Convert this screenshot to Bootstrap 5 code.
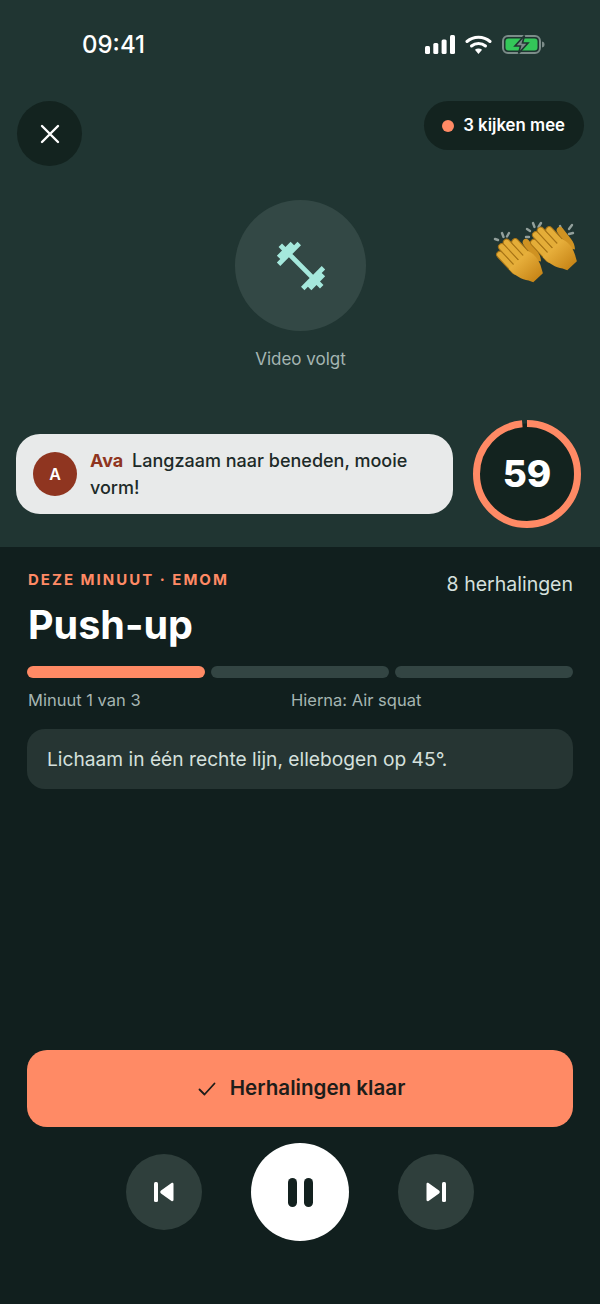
<!DOCTYPE html>
<html lang="nl">
<head>
  <meta charset="UTF-8">
  <meta name="viewport" content="width=device-width, initial-scale=1.0">
  <title>Push-up</title>
  <link href="https://cdn.jsdelivr.net/npm/bootstrap@5.3.0/dist/css/bootstrap.min.css" rel="stylesheet">
  <style>
    html, body { height: 100%; }
    body {
      background: #111f1e;
      color: #fff;
      font-family: "Inter", "Liberation Sans", sans-serif;
    }
    .screen { height: 1304px; }
    .stage { height: 547px; background: #203532; padding: 0 16px 19px 17px; }
    .status-row { height: 90px; padding: 0 39px 0 65px; }
    .clock { font-size: 24px; font-weight: 500; line-height: 1; }
    .status-icons { gap: 10px; margin-top: -2px; }
    .top-row { margin-top: 11px; }
    .close-btn { width: 65px; height: 65px; background: #13231f; padding: 0; border: 0; }
    .viewers { height: 49px; padding: 0 19px 0 18px; background: #13231f; font-size: 16.8px; font-weight: 600; gap: 9px; }
    .viewers i { width: 12px; height: 12px; background: #ff8a65; }
    .video-slot { margin-top: 34px; }
    .disc { width: 131px; height: 131px; background: #334845; }
    .video-label { margin-top: 17px; font-size: 17px; line-height: 22px; color: #a5b5b2; }
    .claps { position: absolute; left: 490px; top: 218px; }
    .bubble { width: 437px; height: 80px; background: #e8eaea; border-radius: 24px; padding: 0 16px 0 17px; gap: 13px; color: #1d2a28; font-size: 18px; line-height: 27px; font-weight: 500; margin-left: -1px; }
    .ava { width: 44px; height: 44px; background: #8f3520; color: #fff; font-size: 16px; font-weight: 600; }
    .ava-name { color: #8f3520; font-weight: 700; margin-right: 4px; }
    .timer { width: 108px; height: 108px; margin-right: 3px; }
    .timer-num { position: absolute; inset: 0; font-size: 37px; font-weight: 800; }
    .panel { height: 757px; padding: 23px 27px 63px; }
    .kicker { color: #ff8a65; font-size: 15px; font-weight: 700; letter-spacing: 2px; line-height: 20px; padding-left: 1px; }
    .reps { margin-top: 2px; font-size: 19.5px; line-height: 24px; color: #d5e0dd; }
    .title { margin: 6px 0 0 1px; font-size: 39.5px; font-weight: 700; line-height: 46px; }
    .segments { margin-top: 18px; gap: 6px; }
    .segments span { height: 12px; background: #334543; }
    .segments .on { background: #ff8a65; }
    .meta { margin-top: 12px; font-size: 16.5px; line-height: 20px; color: #a5b5b2; padding-left: 1px; }
    .meta span:first-child { width: 263px; }
    .cue { margin-top: 19px; height: 60px; padding: 0 20px; background: #263533; border-radius: 18px; font-size: 19.2px; color: #d5e0dd; }
    .done-btn { height: 77px; padding-left: 15px; background: #ff8a65; border: 0; border-radius: 20px; color: #1d1d1a; font-size: 20.6px; font-weight: 600; gap: 14px; }
    .done-btn:hover { background: #ff8a65; color: #1d1d1a; }
    .controls { margin-top: 16px; gap: 49px; }
    .side-btn { width: 76px; height: 76px; background: #2f3f3c; padding: 0; border: 0; }
    .play-btn { width: 98px; height: 98px; background: #fff; padding: 0; border: 0; }
  </style>
</head>
<body>

<div class="screen d-flex flex-column position-relative">
  <section class="stage d-flex flex-column">
    <div class="status-row d-flex justify-content-between align-items-center">
      <span class="clock">09:41</span>
      <span class="status-icons d-flex align-items-center">
        <svg width="30" height="19" viewBox="0 0 30 19" fill="#fff">
          <rect x="0" y="11" width="5" height="8" rx="1.500"/><rect x="8.300" y="8" width="5" height="11" rx="1.500"/><rect x="16.600" y="4.500" width="5" height="14.500" rx="1.500"/><rect x="25" y="0" width="5" height="19" rx="1.500"/>
        </svg>
        <svg width="27" height="19" viewBox="0 0 27 19" fill="none" stroke="#fff" stroke-width="3" stroke-linecap="round">
          <path d="M2 6.500C8.500 .8 18.500 .8 25 6.500"/><path d="M6.500 11C10.500 7.600 16.500 7.600 20.500 11"/>
          <path d="M13.500 19l-3.600-4.200c2.100-1.600 5.100-1.600 7.200 0z" fill="#fff" stroke="none"/>
        </svg>
        <svg width="43" height="19" viewBox="0 0 43 19">
          <rect x="1" y="1" width="37" height="17" rx="5" fill="none" stroke="#7c8c89" stroke-width="2"/>
          <rect x="3.500" y="3.500" width="32" height="12" rx="3" fill="#34c759"/>
          <path d="M40 6.500c2 .3 2.500 1.500 2.500 3s-.5 2.700-2.500 3z" fill="#7c8c89"/>
          <path d="M22.500 .5L13 11h5.500l-2 7.500L26 8h-5.500z" fill="#7c8c89" stroke="#203532" stroke-width="1.600"/>
        </svg>
      </span>
    </div>

    <div class="top-row d-flex justify-content-between align-items-start">
      <button class="close-btn btn rounded-circle d-flex align-items-center justify-content-center" type="button" aria-label="Sluiten">
        <svg width="20" height="20" viewBox="0 0 20 20" fill="none" stroke="#fff" stroke-width="2.400" stroke-linecap="round"><path d="M2 2l16 16M18 2L2 18"/></svg>
      </button>
      <div class="viewers d-flex align-items-center rounded-pill"><i class="rounded-circle"></i>3 kijken mee</div>
    </div>

    <div class="video-slot d-flex flex-column align-items-center">
      <div class="disc rounded-circle d-flex align-items-center justify-content-center">
        <svg width="58" height="58" viewBox="0 0 24 24" fill="#a5e8dc"><path d="M20.570 14.860L22 13.430 20.570 12 17 15.570 8.430 7 12 3.430 10.570 2 9.140 3.430 7.710 2 5.570 4.140 4.140 2.710 2.710 4.140l1.430 1.430L2 7.710l1.430 1.430L2 10.570 3.430 12 7 8.430 15.570 17 12 20.570 13.430 22l1.430-1.430L16.290 22l2.140-2.140 1.430 1.430 1.430-1.430-1.430-1.430L22 16.290z"/></svg>
      </div>
      <div class="video-label">Video volgt</div>
    </div>

    <svg class="claps" width="90" height="66" viewBox="0 0 90 66">
      <defs>
        <linearGradient id="skin" x1="0" y1="0" x2="0" y2="1"><stop offset="0" stop-color="#e8b03c"/><stop offset="1" stop-color="#c88618"/></linearGradient>
        <g id="hand">
          <path d="M9 8L12 -9c1-3 6-3 6 1l-1 12c0 4-2 8-4 10z" fill="#cf9222"/>
          <g fill="#e4ad38" stroke="#a87416" stroke-width=".9">
            <rect x="-13" y="-19" width="6" height="26" rx="3"/>
            <rect x="-7" y="-23" width="6" height="28" rx="3"/>
            <rect x="-1" y="-23" width="6" height="28" rx="3"/>
            <rect x="5" y="-18" width="6" height="24" rx="3"/>
          </g>
          <path d="M-13 -1H11C14 6 12 14 9 19L7 23H-5L-7 19C-11 14 -13 7 -13 -1z" fill="url(#skin)"/>
        </g>
      </defs>
      <g fill="none" stroke="#93a09c" stroke-width="2.400" stroke-linecap="round">
        <path d="M5 21l3 1M12 15l1.500 4M19 15l-2 3.500"/>
        <path d="M37 11l3 2M36 19l3 0M43 5l1.500 4M51 5l-2.500 4"/>
        <path d="M70 8l1.500 4M82 7l-3 4M83 15l-4 1"/>
      </g>
      <use href="#hand" transform="translate(30 42) rotate(-43) scale(1.100)"/>
      <use href="#hand" transform="translate(64 30) rotate(-43) scale(1.100)"/>
    </svg>

    <div class="mt-auto d-flex justify-content-between align-items-center">
      <div class="bubble d-flex align-items-center">
        <div class="ava rounded-circle d-flex align-items-center justify-content-center flex-shrink-0">A</div>
        <div><span class="ava-name">Ava</span> Langzaam naar beneden, mooie vorm!</div>
      </div>
      <div class="timer position-relative">
        <svg width="108" height="108" viewBox="0 0 108 108">
          <circle cx="54" cy="54" r="50.500" fill="#13231f" stroke="#ff8a65" stroke-width="7" stroke-dasharray="312 5.300" transform="rotate(-90 54 54)"/>
        </svg>
        <div class="timer-num d-flex align-items-center justify-content-center">59</div>
      </div>
    </div>
  </section>

  <section class="panel d-flex flex-column flex-grow-1">
    <div class="d-flex justify-content-between align-items-start">
      <span class="kicker">DEZE MINUUT · EMOM</span>
      <span class="reps">8 herhalingen</span>
    </div>
    <h1 class="title">Push-up</h1>
    <div class="segments d-flex">
      <span class="on flex-fill rounded-pill"></span>
      <span class="flex-fill rounded-pill"></span>
      <span class="flex-fill rounded-pill"></span>
    </div>
    <div class="meta d-flex"><span>Minuut 1 van 3</span><span>Hierna: Air squat</span></div>
    <div class="cue d-flex align-items-center">Lichaam in één rechte lijn, ellebogen op 45°.</div>

    <button class="done-btn btn mt-auto d-flex align-items-center justify-content-center w-100" type="button">
      <svg width="18" height="14" viewBox="0 0 18 14" fill="none" stroke="#1d1d1a" stroke-width="1.800" stroke-linecap="round" stroke-linejoin="round"><path d="M1.500 7.500l5 5L16.500 1.500"/></svg>
      Herhalingen klaar
    </button>

    <div class="controls d-flex justify-content-center align-items-center">
      <button class="side-btn btn rounded-circle d-flex align-items-center justify-content-center" type="button" aria-label="Vorige">
        <svg width="20" height="20" viewBox="0 0 20 20" fill="#fff"><rect x="0" y="0" width="4" height="20" rx="1.500"/><path d="M19.500 2v16c0 1-1 1.500-2 1L7 11.500c-1-.7-1-2.300 0-3L17.500 1c1-.5 2 0 2 1z"/></svg>
      </button>
      <button class="play-btn btn rounded-circle d-flex align-items-center justify-content-center" type="button" aria-label="Pauze">
        <svg width="25" height="29" viewBox="0 0 25 29" fill="#13211f"><rect x="0" y="0" width="9" height="29" rx="4.500"/><rect x="16" y="0" width="9" height="29" rx="4.500"/></svg>
      </button>
      <button class="side-btn btn rounded-circle d-flex align-items-center justify-content-center" type="button" aria-label="Volgende">
        <svg width="20" height="20" viewBox="0 0 20 20" fill="#fff"><rect x="16" y="0" width="4" height="20" rx="1.500"/><path d="M.5 2v16c0 1 1 1.500 2 1L13 11.500c1-.7 1-2.300 0-3L2.500 1c-1-.5-2 0-2 1z"/></svg>
      </button>
    </div>
  </section>
</div>

</body>
</html>
